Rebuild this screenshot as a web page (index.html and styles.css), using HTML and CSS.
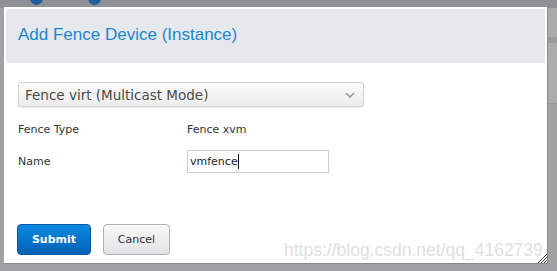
FILE: index.html
```html
<!DOCTYPE html>
<html lang="en">
<head>
    <meta charset="UTF-8">
    <meta name="viewport" content="width=device-width, initial-scale=1.0">
    <title>Add Fence Device</title>
    <link rel="stylesheet" href="styles.css">
</head>
<body>
    <div class="backdrop">
        <div class="topbar">
            <span class="dot dot-one"></span>
            <span class="dot dot-two"></span>
        </div>
        <div class="side-panel">
            <div class="side-top"></div>
            <div class="side-line"></div>
            <div class="side-bottom"></div>
        </div>
    </div>

    <div class="modal">
        <div class="modal-header">
            <h3>Add Fence Device (Instance)</h3>
        </div>

        <div class="modal-body">
            <div class="select-box">
                <span>Fence virt (Multicast Mode)</span>
                <svg class="chevron" width="10" height="6" viewBox="0 0 10 6">
                    <path d="M1 1 L5 5 L9 1" fill="none" stroke="#999" stroke-width="1.6"/>
                </svg>
            </div>

            <div class="form-grid">
                <label>Fence Type</label>
                <span class="value">Fence xvm</span>
                <label for="name">Name</label>
                <div class="input-box" id="name">vmfence<span class="caret"></span></div>
            </div>
        </div>

        <div class="modal-footer">
            <button class="btn btn-primary">Submit</button>
            <button class="btn btn-default">Cancel</button>
        </div>

        <div class="watermark">https://blog.csdn.net/qq_4162739</div>
        <svg class="resize" width="10" height="10" viewBox="0 0 10 10">
            <path d="M1 10 L10 1 M4 10 L10 4 M7 10 L10 7" stroke="#444" stroke-width="1"/>
        </svg>
    </div>
</body>
</html>
```

FILE: styles.css
```css
body {
    margin: 0;
    width: 557px;
    height: 271px;
    overflow: hidden;
    background-color: #a2a2a4;
    font-family: 'DejaVu Sans', sans-serif;
    position: relative;
}
.backdrop {
    height: 271px;
}
.topbar {
    height: 8px;
    background-color: #8f9196;
    position: relative;
}
.dot {
    position: absolute;
    top: -8px;
    width: 13px;
    height: 13px;
    border-radius: 50%;
    background-color: #1f5f9e;
}
.dot-one {
    left: 30px;
}
.dot-two {
    left: 88px;
}
.side-panel {
    margin-left: 547px;
    width: 10px;
}
.side-top {
    height: 29px;
    background-color: #ababab;
}
.side-line {
    height: 6px;
    background-color: #9b9b9d;
}
.side-bottom {
    height: 60px;
    background-color: #acacac;
    border-bottom: 1px solid #979797;
}
/* dialog lies over the page */
.modal {
    position: absolute;
    left: 4px;
    top: 7px;
    width: 539px;
    height: 252px;
    padding: 2px;
    background-color: #fff;
    border-right: 1px solid #8a8a8a;
    border-bottom: 1px solid #8a8a8a;
    display: flex;
    flex-direction: column;
    overflow: hidden;
}
.modal-header {
    height: 54px;
    background-color: #e5e9ed;
    display: flex;
    align-items: center;
    padding-left: 12px;
}
h3 {
    margin: 0;
    font-family: 'Liberation Sans', Arial, sans-serif;
    font-weight: normal;
    font-size: 17px;
    color: #1b87cc;
    padding-bottom: 2px;
}
.modal-body {
    padding: 19px 12px 0 12px;
    flex: 1;
}
.select-box {
    width: 330px;
    height: 23px;
    border: 1px solid #d2d2d2;
    border-radius: 3px;
    background: linear-gradient(#fbfbfb, #ececec);
    box-shadow: 0 1px 1px rgba(0, 0, 0, 0.08);
    display: flex;
    align-items: center;
    justify-content: space-between;
    padding: 0 8px 0 6px;
    font-size: 13.5px;
    color: #4a4a4a;
}
.form-grid {
    display: grid;
    grid-template-columns: 169px 142px;
    grid-auto-rows: 32px;
    align-items: center;
    margin-top: 6px;
    font-size: 11px;
    color: #333;
}
.input-box {
    height: 21px;
    border: 1px solid #cccccc;
    display: flex;
    align-items: center;
    padding-left: 2px;
    font-size: 11px;
    color: #222;
}
.caret {
    display: inline-block;
    width: 1px;
    height: 15px;
    background-color: #111;
}
.modal-footer {
    display: flex;
    gap: 12px;
    padding: 0 0 6px 11px;
}
.btn {
    height: 31px;
    border-radius: 4px;
    font-family: 'DejaVu Sans', sans-serif;
    font-size: 11px;
    cursor: pointer;
}
.btn-primary {
    width: 74px;
    border: 1px solid #0059a6;
    background: linear-gradient(#0c88e0, #0062b6);
    color: #fff;
    font-weight: bold;
}
.btn-default {
    width: 67px;
    border: 1px solid #b0b0b0;
    background: linear-gradient(#f8f8f9, #e2e3e6);
    color: #333;
}
.watermark {
    position: absolute;
    left: 280px;
    bottom: 2px;
    font-family: 'Liberation Sans', Arial, sans-serif;
    font-size: 17.5px;
    color: #e0e0e0;
    white-space: nowrap;
}
.resize {
    position: absolute;
    right: 0;
    bottom: 0;
    z-index: 1;
}
```
